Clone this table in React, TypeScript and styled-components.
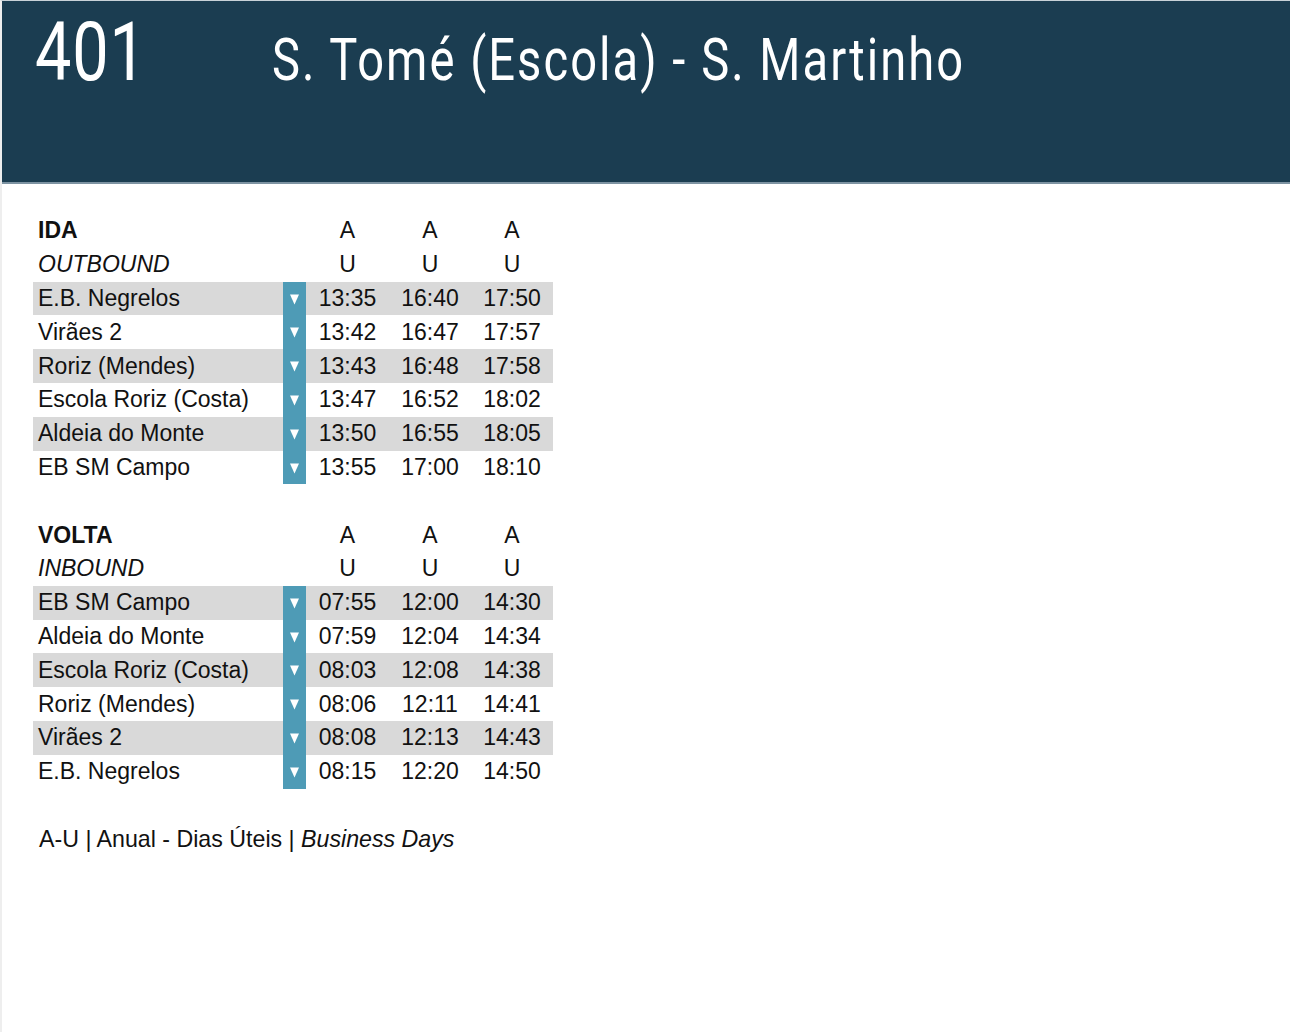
import React from 'react'
import styled, { createGlobalStyle } from 'styled-components'

const GlobalStyle = createGlobalStyle`
  html, body {
    margin: 0;
    padding: 0;
    background: #ffffff;
  }
  body {
    font-family: 'Liberation Sans', Arial, sans-serif;
    color: #111111;
  }
`

const Page = styled.div`
  min-height: 1032px;
  border-left: 2px solid #eeeeee;
  border-top: 1px solid #c9d2d8;
  box-sizing: border-box;
`

const Header = styled.header`
  height: 183px;
  background: #1b3d51;
  border-bottom: 2px solid #7d93a2;
  display: flex;
  align-items: baseline;
  padding: 0 0 0 33px;
  box-sizing: border-box;
  color: #ffffff;
  font-family: Roboto, 'Liberation Sans', sans-serif;
`

// no condensed face installed, so Roboto gets squeezed horizontally
const Squeezed = styled.div<{ $scale: number }>`
  display: inline-block;
  white-space: nowrap;
  font-weight: 400;
  transform: scaleX(${(p) => p.$scale});
  transform-origin: left center;
`

const LineNumber = styled(Squeezed)`
  width: 237px;
  font-size: 81px;
  line-height: 104px;
  letter-spacing: 1px;
`

const LineTitle = styled(Squeezed).attrs({ as: 'h1' })`
  margin: 0;
  font-size: 60px;
  letter-spacing: 2.6px;
  line-height: 104px;
`

const Content = styled.main`
  padding: 30px 0 0 31px;
`

const Timetable = styled.div`
  display: grid;
  grid-template-columns: 250px 23px 83px 82px 82px;
  grid-auto-rows: 33.8px;
  width: max-content;
  font-size: 23px;
`

const Cell = styled.div<{ $shade?: boolean; $align?: 'left' | 'center' }>`
  display: flex;
  align-items: center;
  justify-content: ${(p) => (p.$align === 'left' ? 'flex-start' : 'center')};
  padding-left: ${(p) => (p.$align === 'left' ? '5px' : '0')};
  background: ${(p) => (p.$shade ? '#d9d9d9' : 'transparent')};
  white-space: nowrap;
`

const Title = styled(Cell)`
  font-weight: bold;
`

const Subtitle = styled(Cell)`
  font-style: italic;
`

const ArrowCell = styled.div`
  background: #4e9bb6;
  display: flex;
  justify-content: center;
  align-items: flex-start;
  padding-top: 12px;
  box-sizing: border-box;
`

const Spacer = styled.div`
  grid-column: 1 / -1;
`

const Note = styled.p`
  margin: 0;
  padding: 33px 0 0 6px;
  font-size: 23.2px;
  line-height: 34px;
  em {
    font-style: italic;
  }
`

const Arrow = () => (
  <svg width="11" height="11" viewBox="0 0 11 11">
    <polygon points="1,0.5 10,0.5 5.5,10.5" fill="#ffffff" />
  </svg>
)

type Section = {
  title: string
  subtitle: string
  stops: { name: string; times: string[] }[]
}

const sections: Section[] = [
  {
    title: 'IDA',
    subtitle: 'OUTBOUND',
    stops: [
      { name: 'E.B. Negrelos', times: ['13:35', '16:40', '17:50'] },
      { name: 'Virães 2', times: ['13:42', '16:47', '17:57'] },
      { name: 'Roriz (Mendes)', times: ['13:43', '16:48', '17:58'] },
      { name: 'Escola Roriz (Costa)', times: ['13:47', '16:52', '18:02'] },
      { name: 'Aldeia do Monte', times: ['13:50', '16:55', '18:05'] },
      { name: 'EB SM Campo', times: ['13:55', '17:00', '18:10'] },
    ],
  },
  {
    title: 'VOLTA',
    subtitle: 'INBOUND',
    stops: [
      { name: 'EB SM Campo', times: ['07:55', '12:00', '14:30'] },
      { name: 'Aldeia do Monte', times: ['07:59', '12:04', '14:34'] },
      { name: 'Escola Roriz (Costa)', times: ['08:03', '12:08', '14:38'] },
      { name: 'Roriz (Mendes)', times: ['08:06', '12:11', '14:41'] },
      { name: 'Virães 2', times: ['08:08', '12:13', '14:43'] },
      { name: 'E.B. Negrelos', times: ['08:15', '12:20', '14:50'] },
    ],
  },
]

const TripSection = ({ section }: { section: Section }) => (
  <>
    <Title $align="left">{section.title}</Title>
    <Cell />
    <Cell>A</Cell>
    <Cell>A</Cell>
    <Cell>A</Cell>
    <Subtitle $align="left">{section.subtitle}</Subtitle>
    <Cell />
    <Cell>U</Cell>
    <Cell>U</Cell>
    <Cell>U</Cell>
    {section.stops.map((stop, i) => (
      <React.Fragment key={stop.name}>
        <Cell $align="left" $shade={i % 2 === 0}>
          {stop.name}
        </Cell>
        <ArrowCell>
          <Arrow />
        </ArrowCell>
        {stop.times.map((t, j) => (
          <Cell key={j} $shade={i % 2 === 0}>
            {t}
          </Cell>
        ))}
      </React.Fragment>
    ))}
  </>
)

export default function App() {
  return (
    <Page>
      <GlobalStyle />
      <Header>
        <LineNumber $scale={0.8}>401</LineNumber>
        <LineTitle $scale={0.785}>S. Tomé (Escola) - S. Martinho</LineTitle>
      </Header>
      <Content>
        <Timetable>
          <TripSection section={sections[0]} />
          <Spacer />
          <TripSection section={sections[1]} />
        </Timetable>
        <Note>
          A-U | Anual - Dias Úteis | <em>Business Days</em>
        </Note>
      </Content>
    </Page>
  )
}
